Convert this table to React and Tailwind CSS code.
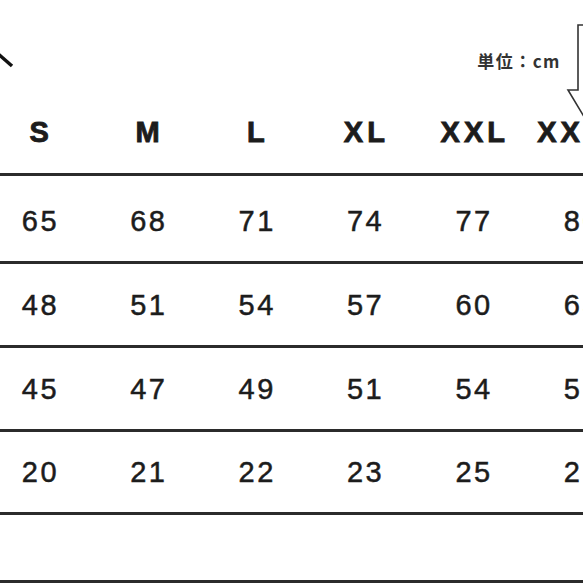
import React from 'react';

const sizes = ['S', 'M', 'L', 'XL', 'XXL', 'XXXL'];

const rows = [
  { values: ['65', '68', '71', '74', '77', '80'], h: 'h-[88px]', pad: 'pt-[5px]' },
  { values: ['48', '51', '54', '57', '60', '63'], h: 'h-[84px]', pad: 'pt-0' },
  { values: ['45', '47', '49', '51', '54', '57'], h: 'h-[84px]', pad: 'pt-0' },
  { values: ['20', '21', '22', '23', '25', '26'], h: 'h-[83px]', pad: 'pt-0' },
];

export default function App() {
  return (
    <div className="relative w-[583px] h-[583px] overflow-hidden bg-white text-[#1c1c1c] font-['Liberation_Sans',Arial,sans-serif]">
      {/* arrow pieces from the chart drawing */}
      <svg className="absolute inset-0 pointer-events-none" width="583" height="583" viewBox="0 0 583 583">
        <line x1="-4" y1="52" x2="12" y2="66" stroke="#111" strokeWidth="3.5" />
        <path
          d="M586 25 L578 25 L578 90 L568 90 L586 120"
          fill="none"
          stroke="#333"
          strokeWidth="1.6"
          strokeLinejoin="miter"
        />
      </svg>

      {/* header: unit + size labels */}
      <div className="h-[176px] border-b-[3px] border-[#2b2b2b] flex flex-col">
        <div className="flex justify-end pt-[49px] pr-[22px]">
          <span className="text-[17px] leading-[24px] font-bold tracking-[1.5px] text-[#333] font-['Noto_Sans_CJK_JP','Liberation_Sans',sans-serif]">
            単位：cm
          </span>
        </div>
        <div className="flex -ml-[15px] mt-[41px]">
          {sizes.map((s) => (
            <div key={s} className="w-[108.4px] shrink-0 flex justify-center">
              <span className="text-[29px] leading-[36px] font-bold tracking-[4px] pl-[4px] whitespace-nowrap [-webkit-text-stroke:0.9px_#1c1c1c]">
                {s}
              </span>
            </div>
          ))}
        </div>
      </div>

      {rows.map((row, i) => (
        <div
          key={i}
          className={`${row.h} ${row.pad} border-b-[3px] border-[#2b2b2b] flex items-center -ml-[15px]`}
        >
          {row.values.map((v, j) => (
            <div key={j} className="w-[108.4px] shrink-0 flex justify-center">
              <span className="text-[29px] leading-[36px] tracking-[2.5px] pl-[2.5px] [-webkit-text-stroke:0.5px_#1c1c1c]">
                {v}
              </span>
            </div>
          ))}
        </div>
      ))}

      <div className="h-[68px] border-b-[3px] border-[#2b2b2b]" />
    </div>
  );
}
